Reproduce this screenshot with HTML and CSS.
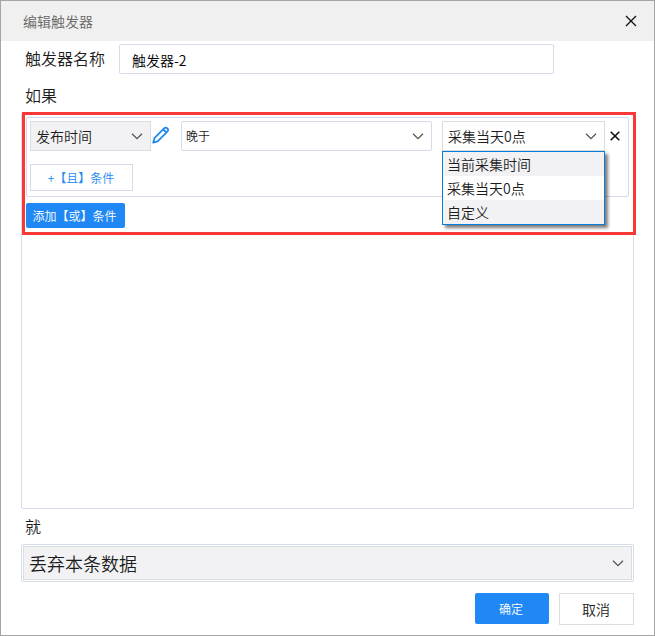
FILE: index.html
```html
<!DOCTYPE html>
<html lang="zh-CN">
<head>
<meta charset="utf-8">
<title>编辑触发器</title>
<link rel="stylesheet" href="styles.css">
</head>
<body>
<div class="dialog">
  <header class="titlebar">
    <span class="title">编辑触发器</span>
    <svg class="close" width="12" height="12" viewBox="0 0 12 12"><path d="M1 1l10 10M11 1L1 11"/></svg>
  </header>
  <main class="content">
    <div class="name-row">
      <label class="label">触发器名称</label>
      <div class="name-input">触发器-2</div>
    </div>
    <div class="label if-label">如果</div>
    <section class="panel">
      <div class="highlight">
        <div class="group">
          <div class="condition">
            <div class="select field">
              <span>发布时间</span>
              <svg class="chevron" width="12" height="8" viewBox="0 0 12 8"><path d="M1 1.7l5 5 5-5"/></svg>
            </div>
            <svg class="pencil" width="18" height="18" viewBox="0 0 18 18"><path d="M1.2 16.7l1.2-4.5L12.1 2.4q1.6-1.6 3.2 0t0 3.2L5.6 15.3zM11.2 3.4l3.1 3.1"/></svg>
            <div class="select operator">
              <span>晚于</span>
              <svg class="chevron" width="12" height="8" viewBox="0 0 12 8"><path d="M1 1.7l5 5 5-5"/></svg>
            </div>
            <div class="select value">
              <span>采集当天0点</span>
              <svg class="chevron" width="12" height="8" viewBox="0 0 12 8"><path d="M1 1.7l5 5 5-5"/></svg>
              <ul class="menu">
                <li>当前采集时间</li>
                <li>采集当天0点</li>
                <li>自定义</li>
              </ul>
            </div>
            <svg class="remove" width="10" height="10" viewBox="0 0 10 10"><path d="M.7.7l8.6 8.6M9.3.7L.7 9.3"/></svg>
          </div>
          <div class="and-button">+【且】条件</div>
        </div>
        <div class="or-button">添加【或】条件</div>
      </div>
    </section>
    <div class="label then-label">就</div>
    <div class="action-frame">
      <div class="select action">
        <span>丢弃本条数据</span>
        <svg class="chevron" width="12" height="8" viewBox="0 0 12 8"><path d="M1 1.7l5 5 5-5"/></svg>
      </div>
    </div>
    <footer class="footer">
      <div class="ok">确定</div>
      <div class="cancel">取消</div>
    </footer>
  </main>
</div>
</body>
</html>
```
FILE: styles.css
```css
* { box-sizing: border-box; }
body {
  margin: 0;
  font: 14px/20px "Noto Sans CJK SC", sans-serif;
  font-weight: 350;
  color: #1c1c1c;
  background: #fff;
}
svg { fill: none; flex: none; }
.dialog {
  width: 655px;
  height: 636px;
  border: 1px solid #a5a5a8;
  overflow: hidden;
}
.titlebar {
  height: 40px;
  padding: 0 17px 0 22px;
  display: flex;
  align-items: center;
  justify-content: space-between;
  background: #f0f0f0;
  color: #666;
}
.close { stroke: #111; stroke-width: 1.3; }
.content { padding: 3px 20px 0; }
.name-row { display: flex; align-items: center; height: 30px; }
.label { padding-left: 4px; font-size: 16px; line-height: 22px; height: 24px; }
.name-row .label { width: 98px; }
.name-input {
  width: 435px;
  height: 30px;
  padding: 5px 12px 0;
  border: 1px solid #d6dbec;
  border-radius: 2px;
  line-height: 20px;
  color: #000;
}
.if-label { margin-top: 10px; }
.panel {
  width: 613px;
  height: 396px;
  margin-top: 5px;
  border: 1px solid #d6dbec;
  border-radius: 2px;
}
.highlight {
  width: 614px;
  height: 123px;
  margin-top: -2px;
  padding: 2px 1px 0;
  border: 3px solid #fb3838;
}
.group {
  width: 603px;
  height: 80px;
  padding: 3px;
  border: 1px solid #d6dbec;
  border-radius: 2px;
}
.condition { display: flex; align-items: center; height: 30px; }
.select {
  height: 30px;
  display: flex;
  align-items: center;
  justify-content: space-between;
  padding: 0 7px 0 5px;
  border: 1px solid #d8dde0;
}
.chevron { stroke: #555; stroke-width: 1.3; }
.field { width: 121px; background: #f2f2f5; }
.pencil { margin: 0 11px 2px 1px; stroke: #2088f0; stroke-width: 1.8; stroke-linejoin: round; }
.operator { width: 251px; padding-left: 4px; font-size: 12px; border-color: #d6dbec; border-radius: 2px; }
.operator .chevron { margin-bottom: 1px; }
.value { position: relative; width: 163px; margin-left: 10px; }
.remove { margin-left: 5px; stroke: #111; stroke-width: 1.6; }
.menu {
  position: absolute;
  z-index: 1;
  top: 29px;
  left: -1px;
  width: 163px;
  height: 74px;
  margin: 0;
  padding: 0;
  list-style: none;
  border: 1px solid #087cda;
  background: #fff;
  box-shadow: 3px 3px 3px rgba(0, 0, 0, .5);
}
.menu li { height: 24px; padding: 2px 4px 0; line-height: 20px; }
.menu li:nth-child(odd) { background: #f2f2f5; }
.and-button {
  width: 103px;
  height: 27px;
  margin-top: 13px;
  padding-right: 1px;
  border: 1px solid #d6dbec;
  color: #2088f0;
  font-size: 12px;
  line-height: 26px;
  text-align: center;
}
.or-button {
  width: 99px;
  height: 25px;
  margin-top: 6px;
  padding-right: 2px;
  border-radius: 2px;
  background: #2088f4;
  color: #fff;
  font-size: 12px;
  line-height: 25px;
  text-align: center;
}
.then-label { margin-top: 6px; }
.action-frame {
  width: 613px;
  height: 38px;
  margin-top: 5px;
  padding: 1px;
  border: 1px solid #d6dbec;
  border-radius: 2px;
}
.action { height: 34px; background: #f2f2f5; font-size: 18px; }
.footer { display: flex; justify-content: flex-end; gap: 10px; margin-top: 11px; }
.ok {
  width: 74px;
  height: 31px;
  padding-right: 2px;
  border-radius: 2px;
  background: #2088f4;
  color: #fff;
  font-size: 12px;
  line-height: 32px;
  text-align: center;
}
.cancel {
  width: 75px;
  height: 32px;
  padding-right: 1px;
  border: 1px solid #dedede;
  line-height: 30px;
  text-align: center;
}
```
